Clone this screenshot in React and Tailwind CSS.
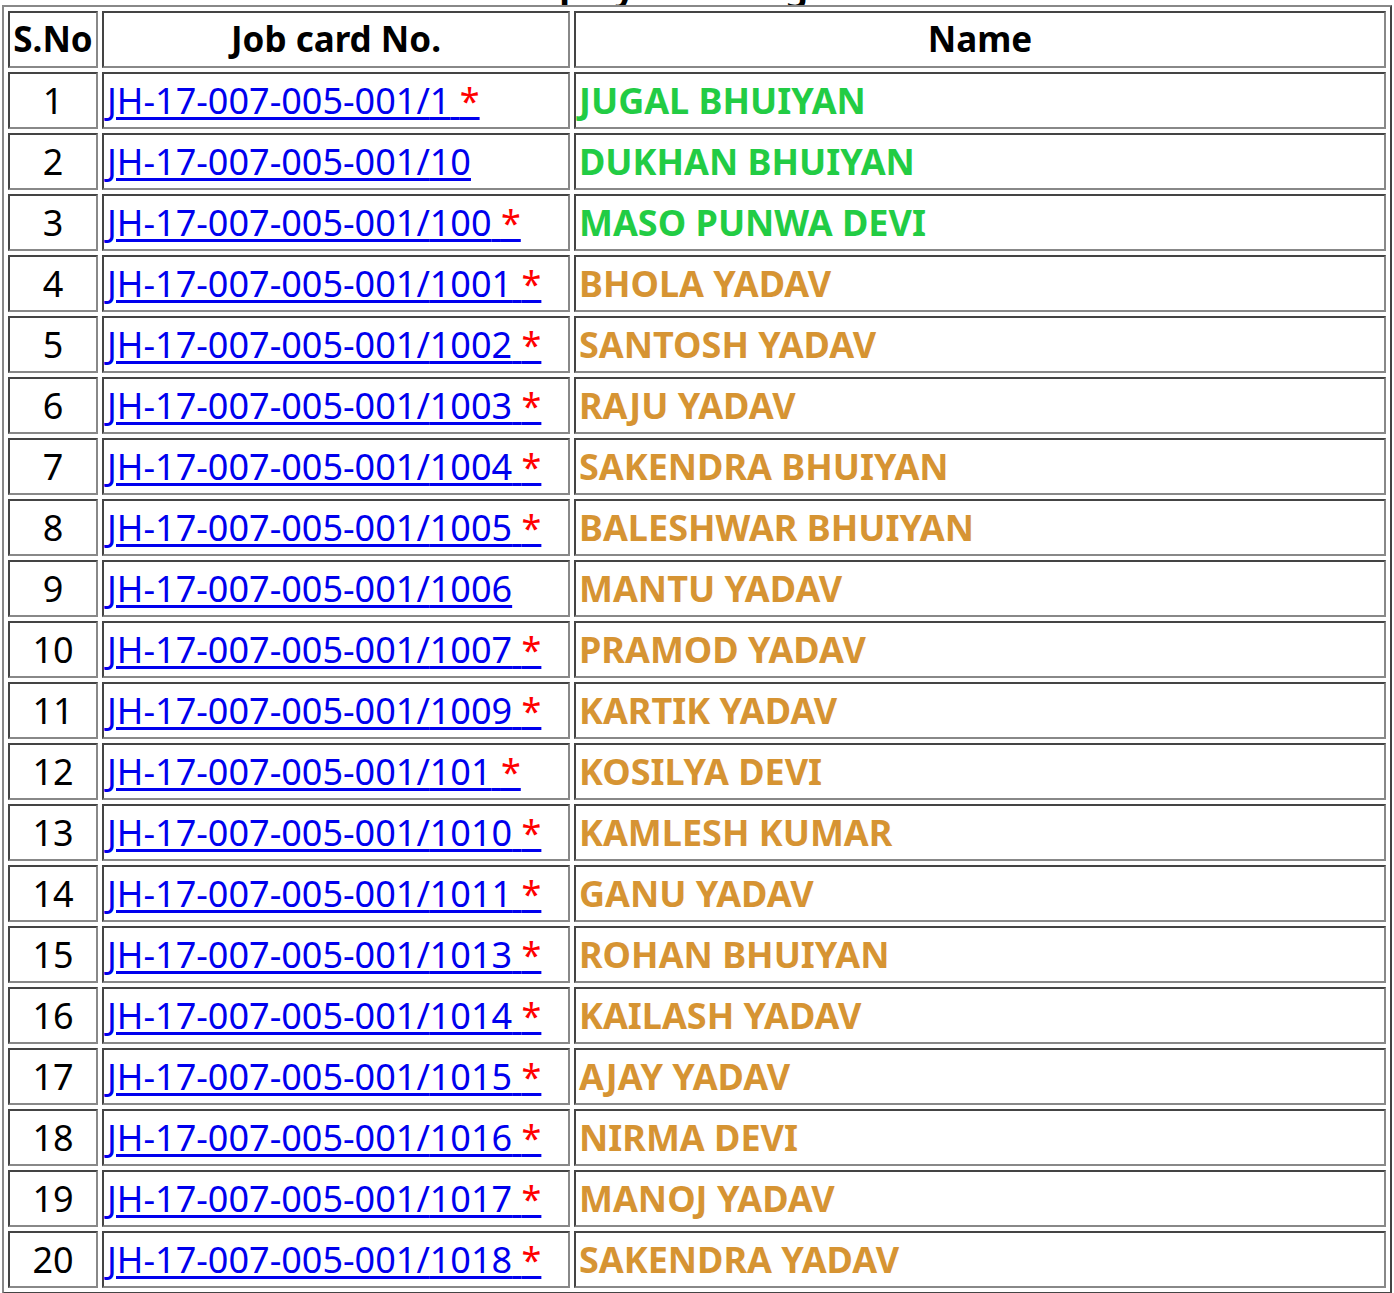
import React from 'react';

const rows = [
  ['1', '1', true, 'JUGAL BHUIYAN', 'g'],
  ['2', '10', false, 'DUKHAN BHUIYAN', 'g'],
  ['3', '100', true, 'MASO PUNWA DEVI', 'g'],
  ['4', '1001', true, 'BHOLA YADAV'],
  ['5', '1002', true, 'SANTOSH YADAV'],
  ['6', '1003', true, 'RAJU YADAV'],
  ['7', '1004', true, 'SAKENDRA BHUIYAN'],
  ['8', '1005', true, 'BALESHWAR BHUIYAN'],
  ['9', '1006', false, 'MANTU YADAV'],
  ['10', '1007', true, 'PRAMOD YADAV'],
  ['11', '1009', true, 'KARTIK YADAV'],
  ['12', '101', true, 'KOSILYA DEVI'],
  ['13', '1010', true, 'KAMLESH KUMAR'],
  ['14', '1011', true, 'GANU YADAV'],
  ['15', '1013', true, 'ROHAN BHUIYAN'],
  ['16', '1014', true, 'KAILASH YADAV'],
  ['17', '1015', true, 'AJAY YADAV'],
  ['18', '1016', true, 'NIRMA DEVI'],
  ['19', '1017', true, 'MANOJ YADAV'],
  ['20', '1018', true, 'SAKENDRA YADAV'],
];

const cell = 'border-2 border-t-[#444] border-l-[#444] border-r-[#888] border-b-[#888] h-[57px] px-[3px] py-0';

export default function App() {
  return (
    <div className="bg-white font-['Liberation_Serif'] text-black w-[1394px]">
      <div className="h-[5px] overflow-hidden relative">
        <div className="absolute left-0 right-0 bottom-0 text-center font-bold text-[36px] leading-[36px]">Employment Register</div>
      </div>
      <table className="ml-[2px] w-[1390px] border-separate border-spacing-[4px] border-2 border-t-[#888] border-l-[#888] border-r-[#444] border-b-[#444]">
        <thead>
          <tr className="text-[35px] font-bold">
            <th className={cell + ' w-[90px] text-center'}>S.No</th>
            <th className={cell + ' w-[468px] text-center'}>Job card No.</th>
            <th className={cell + ' text-center'}>Name</th>
          </tr>
        </thead>
        <tbody>
          {rows.map(([n, j, star, name, c]) => (
            <tr key={n} className="text-[36px] leading-none">
              <td className={cell + ' text-center'}>{n}</td>
              <td className={cell + ' text-left'}>
                <a href="#" className="text-[#0000ee] underline decoration-[3px] underline-offset-[3px]">
                  JH-17-007-005-001/{j}{star && <> <span className="text-[#ff0000]">*</span></>}
                </a>
              </td>
              <td className={cell + ' text-left font-bold ' + (c === 'g' ? 'text-[#22cc44]' : 'text-[#d69433]')}>{name}</td>
            </tr>
          ))}
        </tbody>
      </table>
    </div>
  );
}
